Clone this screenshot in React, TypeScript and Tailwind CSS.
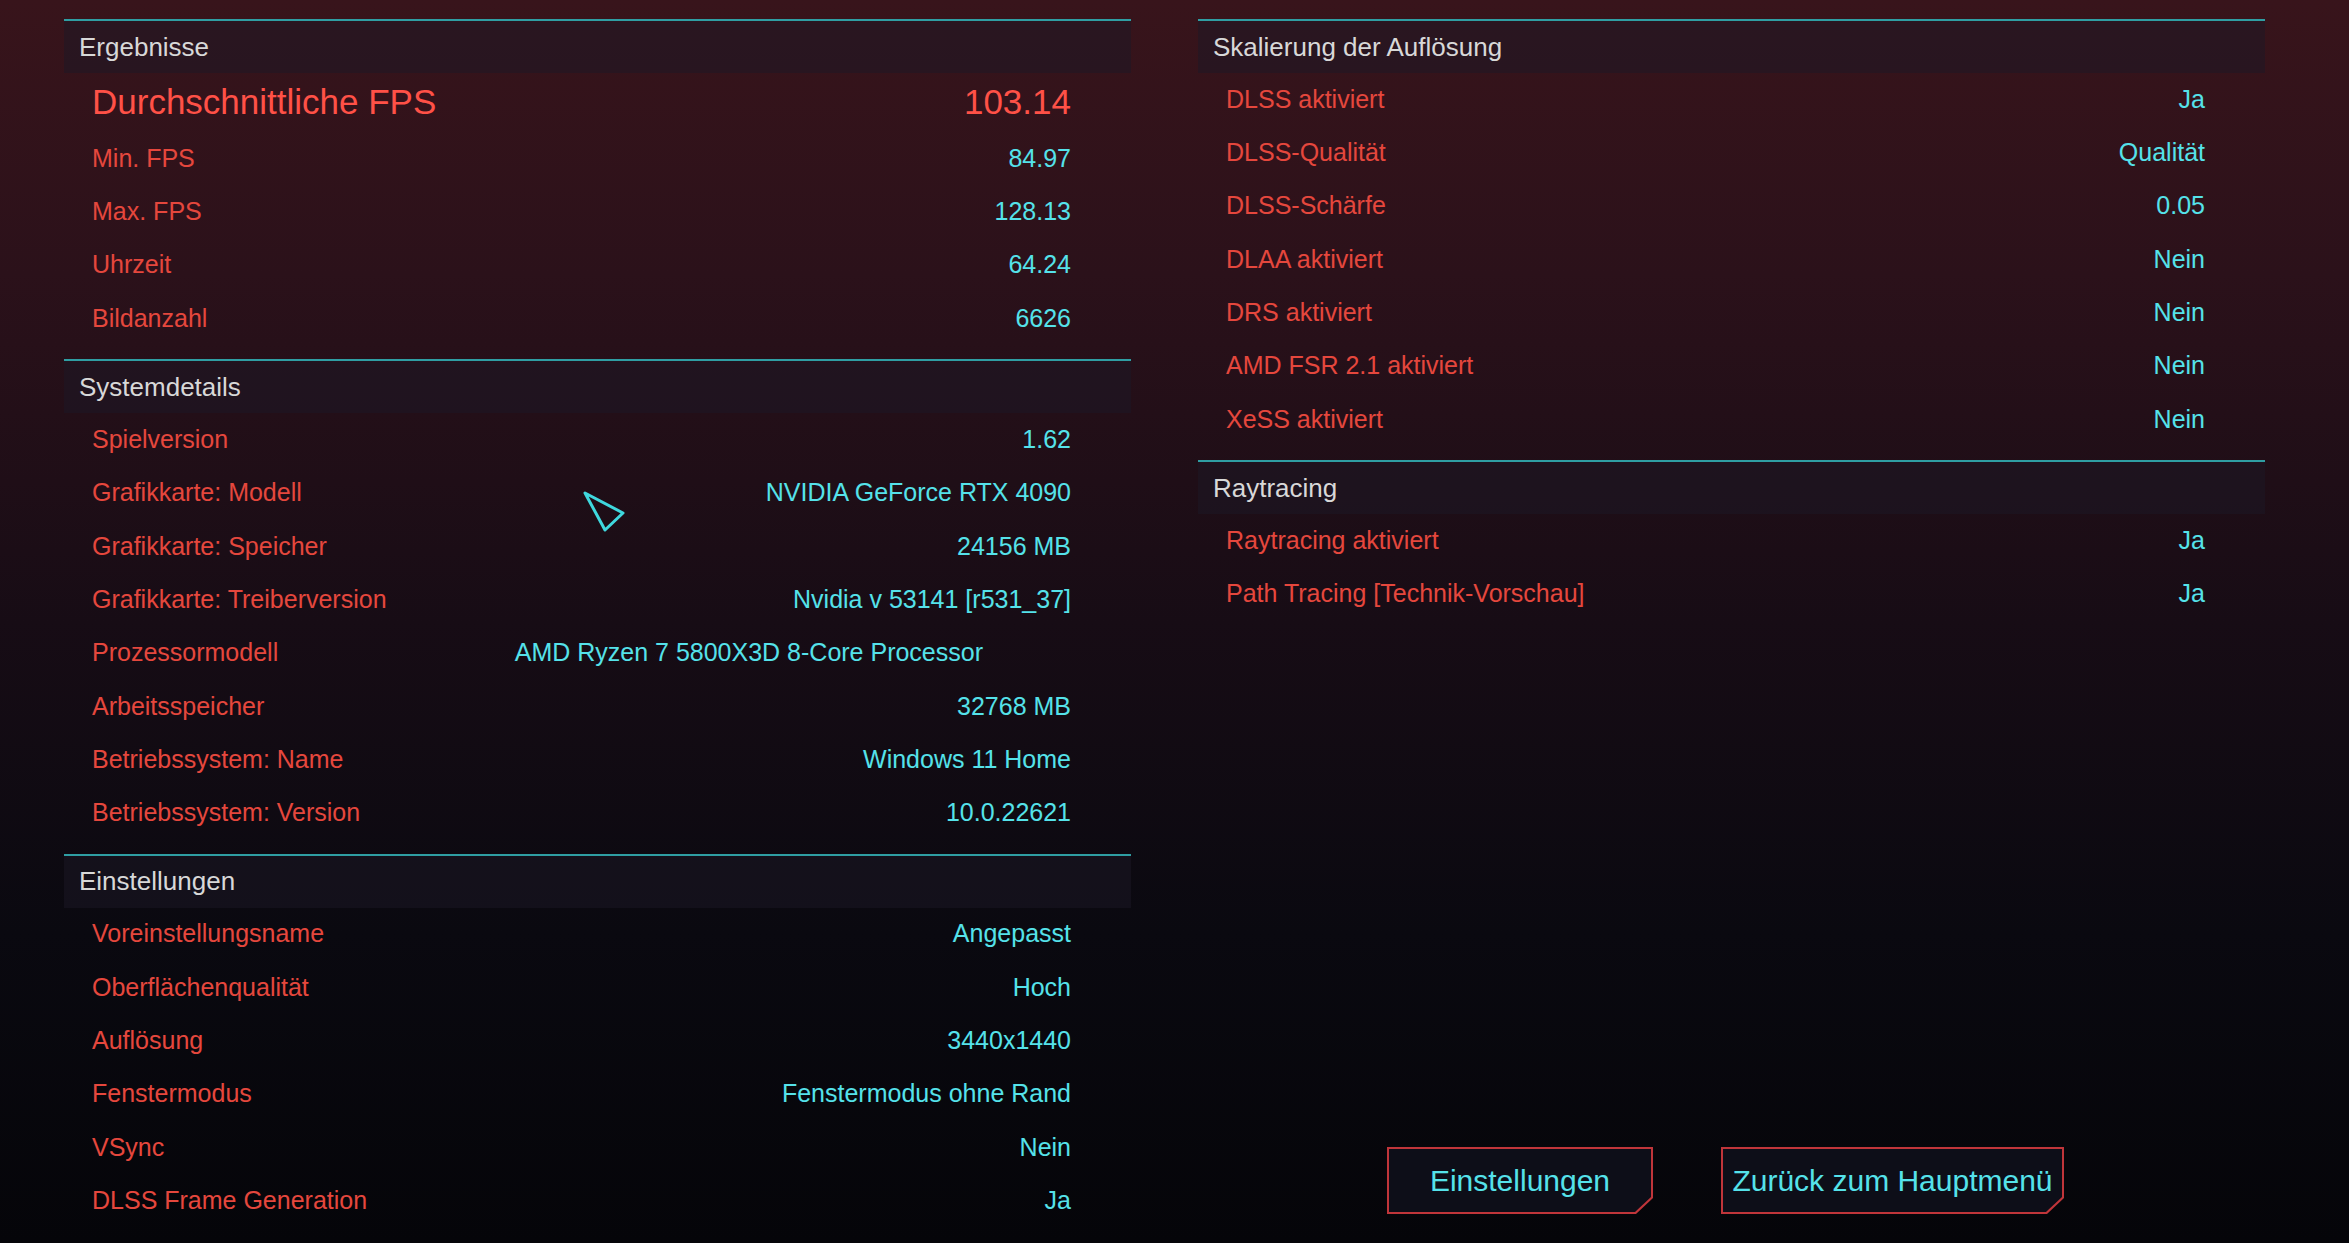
import React from "react";

interface Row {
  label: string;
  value: string;
  valueClass?: string;
}

const ergebnisse: Row[] = [
  { label: "Min. FPS", value: "84.97" },
  { label: "Max. FPS", value: "128.13" },
  { label: "Uhrzeit", value: "64.24" },
  { label: "Bildanzahl", value: "6626" },
];

const systemdetails: Row[] = [
  { label: "Spielversion", value: "1.62" },
  { label: "Grafikkarte: Modell", value: "NVIDIA GeForce RTX 4090" },
  { label: "Grafikkarte: Speicher", value: "24156 MB" },
  { label: "Grafikkarte: Treiberversion", value: "Nvidia v 53141 [r531_37]" },
  { label: "Prozessormodell", value: "AMD Ryzen 7 5800X3D 8-Core Processor", valueClass: "mr-[88px]" },
  { label: "Arbeitsspeicher", value: "32768 MB" },
  { label: "Betriebssystem: Name", value: "Windows 11 Home" },
  { label: "Betriebssystem: Version", value: "10.0.22621" },
];

const einstellungen: Row[] = [
  { label: "Voreinstellungsname", value: "Angepasst" },
  { label: "Oberflächenqualität", value: "Hoch" },
  { label: "Auflösung", value: "3440x1440" },
  { label: "Fenstermodus", value: "Fenstermodus ohne Rand" },
  { label: "VSync", value: "Nein" },
  { label: "DLSS Frame Generation", value: "Ja" },
];

const skalierung: Row[] = [
  { label: "DLSS aktiviert", value: "Ja" },
  { label: "DLSS-Qualität", value: "Qualität" },
  { label: "DLSS-Schärfe", value: "0.05" },
  { label: "DLAA aktiviert", value: "Nein" },
  { label: "DRS aktiviert", value: "Nein" },
  { label: "AMD FSR 2.1 aktiviert", value: "Nein" },
  { label: "XeSS aktiviert", value: "Nein" },
];

const raytracing: Row[] = [
  { label: "Raytracing aktiviert", value: "Ja" },
  { label: "Path Tracing [Technik-Vorschau]", value: "Ja" },
];

const DataRow: React.FC<{ row: Row }> = ({ row }) => (
  <div className="flex h-[53.3px] items-center justify-between pl-[28px] pr-[60px] text-[25px]">
    <span className="text-[#e5473d]">{row.label}</span>
    <span className={`text-[#55e2ea] ${row.valueClass ?? ""}`}>{row.value}</span>
  </div>
);

const Section: React.FC<{ title: string; rows: Row[]; children?: React.ReactNode }> = ({ title, rows, children }) => (
  <div className="border-t-2 border-[#2f9ea3] pb-[14px]">
    <div className="flex h-[52px] items-center bg-[#1c1826]/50 pl-[15px] text-[26px] text-[#d8d8d8]">{title}</div>
    {children}
    {rows.map((row) => (
      <DataRow key={row.label} row={row} />
    ))}
  </div>
);

const CutButton: React.FC<{ label: string; width: string }> = ({ label, width }) => (
  <div
    className={`${width} h-[67px] bg-[#c0353a] p-[2px] [clip-path:polygon(0_0,100%_0,100%_calc(100%_-_16px),calc(100%_-_17px)_100%,0_100%)]`}
  >
    <div className="flex h-full w-full items-center justify-center bg-[#0d0e18] text-[30px] text-[#55e2ea] [clip-path:polygon(0_0,100%_0,100%_calc(100%_-_15px),calc(100%_-_16px)_100%,0_100%)]">
      {label}
    </div>
  </div>
);

export default function App() {
  return (
    <div className="h-[1243px] w-[2349px] overflow-hidden bg-[linear-gradient(180deg,#38141b_0%,#2b111a_22%,#170c15_50%,#0a0910_75%,#050509_100%)] font-['Liberation_Sans',Arial,sans-serif]">
      <div className="flex h-full gap-[67px] pl-[64px] pt-[19px]">
        <div className="relative w-[1067px]">
          <Section title="Ergebnisse" rows={ergebnisse}>
            <div className="flex h-[59px] items-center justify-between pl-[28px] pr-[60px] text-[35px] text-[#ff5147]">
              <span>Durchschnittliche FPS</span>
              <span>103.14</span>
            </div>
          </Section>
          <Section title="Systemdetails" rows={systemdetails} />
          <Section title="Einstellungen" rows={einstellungen} />

          {/* mouse cursor */}
          <svg className="absolute left-[511px] top-[464px]" width="60" height="60" viewBox="0 0 60 60" fill="none">
            <path d="M10 10 L48 30 L30 47 Z" stroke="#3fd8de" strokeWidth="3" strokeLinejoin="round" />
          </svg>
        </div>

        <div className="flex w-[1067px] flex-col">
          <Section title="Skalierung der Auflösung" rows={skalierung} />
          <Section title="Raytracing" rows={raytracing} />

          <div className="mt-auto flex justify-center gap-[68px] pb-[29px] pr-[12px]">
            <CutButton label="Einstellungen" width="w-[266px]" />
            <CutButton label="Zurück zum Hauptmenü" width="w-[343px]" />
          </div>
        </div>
      </div>
    </div>
  );
}
